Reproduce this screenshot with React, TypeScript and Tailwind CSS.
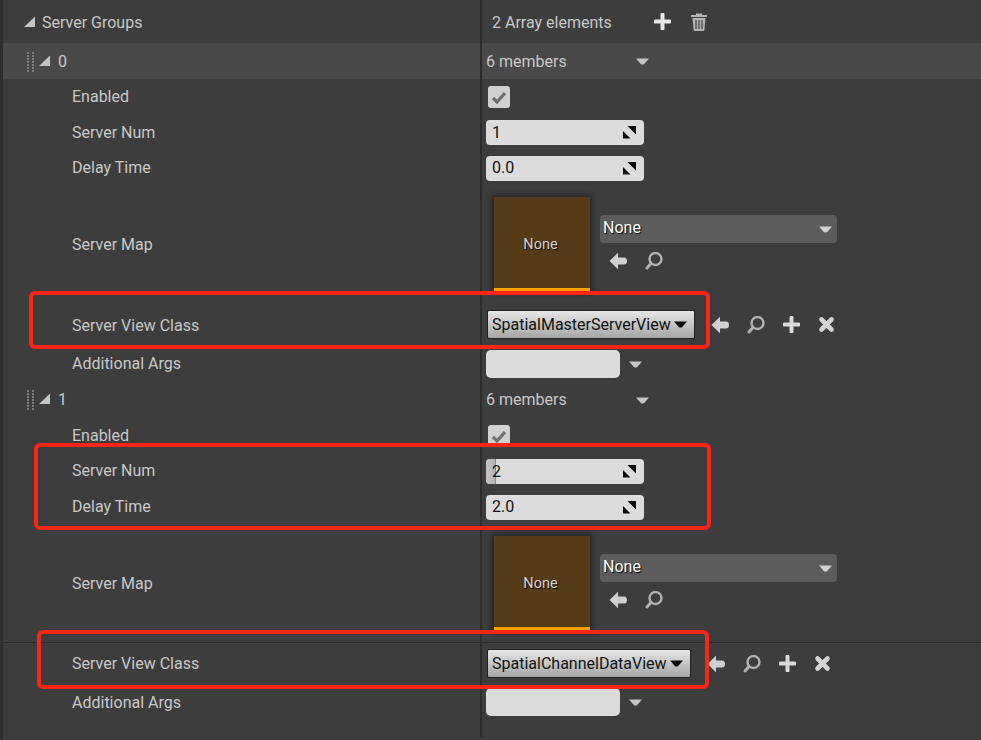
import React from 'react';

const Corner = ({ className = '' }: { className?: string }) => (
  <svg width="12" height="11" viewBox="0 0 12 11" className={className}>
    <path d="M0 11L11 0.5V11Z" fill="#c4c4c4" />
  </svg>
);

const Grip = () => (
  <svg width="8" height="21" viewBox="0 0 8 21" className="shrink-0">
    {[0, 3, 6, 9, 12, 15, 18].map((y) => (
      <g key={y} fill="#7d7d7d">
        <rect x="0" y={y} width="2" height="2" />
        <rect x="5" y={y} width="2" height="2" />
      </g>
    ))}
  </svg>
);

const Caret = ({ color = '#c4c4c4', className = '' }: { color?: string; className?: string }) => (
  <svg width="13" height="7" viewBox="0 0 13 7" className={className}>
    <path d="M0 0.5H13L8 6.2Q6.5 7 5 6.2Z" fill={color} />
  </svg>
);

const SpinIcon = () => (
  <svg width="13" height="13" viewBox="0 0 13 13" className="shrink-0 blur-[0.3px]">
    <path d="M4.5 0H13V8.5Z" fill="#0c0c0c" />
    <path d="M0 5L7.5 12.5H0Z" fill="#0c0c0c" />
  </svg>
);

const BackIcon = () => (
  <svg width="18" height="18" viewBox="0 0 18 18" className="shrink-0 blur-[0.3px]">
    <path d="M0.5 9L9 0.8V5.5H15Q18 5.5 18 9Q18 12.5 15 12.5H9V17.2Z" fill="#d0d0d0" />
  </svg>
);

const SearchIcon = () => (
  <svg width="18" height="18" viewBox="0 0 18 18" className="shrink-0 blur-[0.3px]">
    <circle cx="10.5" cy="7" r="6" fill="none" stroke="#b2b2b2" strokeWidth="2.4" />
    <path d="M5.8 11.8L2 16" stroke="#b2b2b2" strokeWidth="3" strokeLinecap="round" />
  </svg>
);

const PlusIcon = ({ color = '#d8d8d8' }: { color?: string }) => (
  <svg width="17" height="17" viewBox="0 0 17 17" className="shrink-0 blur-[0.3px]">
    <path d="M8.5 1.5V15.5M1.5 8.5H15.5" stroke={color} strokeWidth="4" strokeLinecap="round" />
  </svg>
);

const CloseIcon = () => (
  <svg width="17" height="17" viewBox="0 0 17 17" className="shrink-0 blur-[0.3px]">
    <path d="M3.5 3.5L13.5 13.5M13.5 3.5L3.5 13.5" stroke="#d4d4d4" strokeWidth="4.6" strokeLinecap="round" />
  </svg>
);

const TrashIcon = () => (
  <svg width="16" height="19" viewBox="0 0 16 19" className="shrink-0">
    <path d="M5 1.5H11V3H16V5H0V3H5Z" fill="#b4b4b4" />
    <path d="M1.5 6H14.5L13.4 18Q13.3 19 12.4 19H3.6Q2.7 19 2.6 18Z" fill="#b4b4b4" />
    <path d="M5 8V17M8 8V17M11 8V17" stroke="#3d3d3d" strokeWidth="1.2" />
  </svg>
);

const Row = ({
  height,
  label,
  right,
  indent = 'pl-[69px]',
  nudge = false,
  className = '',
}: {
  height: string;
  label: React.ReactNode;
  right: React.ReactNode;
  indent?: string;
  nudge?: boolean;
  className?: string;
}) => (
  <div className={`flex ${height} ${className}`}>
    <div className={`flex w-[477px] shrink-0 items-center ${indent} ${nudge ? 'pt-[2px]' : ''}`}>{label}</div>
    <div className="w-[2px] shrink-0 bg-[#2c2c2c]" />
    <div className="flex min-w-0 flex-1 items-center pl-1">{right}</div>
  </div>
);

const NumberField = ({ value, dragged = false }: { value: string; dragged?: boolean }) => (
  <div className="relative mt-px flex h-[25px] w-[158px] items-center justify-between overflow-hidden rounded-[4px] bg-[#dcdcdc] pl-1.5 pr-2 text-[#111]">
    {dragged && (
      <div className="absolute inset-y-0 left-0 w-[10px] border-r border-[#8a8a8a] bg-gradient-to-r from-[#c4c4c4] to-[#b4b4b4]" />
    )}
    <span className="relative">{value}</span>
    <SpinIcon />
  </div>
);

const Members = ({ nudge }: { nudge: boolean }) => (
  <div className="flex items-center">
    <span className={`w-[150px] ${nudge ? 'pt-[2px]' : ''}`}>6 members</span>
    <Caret />
  </div>
);

const Checkbox = () => (
  <div className="ml-[2px] flex h-[22px] w-[22px] items-center justify-center rounded-[3px] bg-[#d0d0d0]">
    <svg width="16" height="14" viewBox="0 0 16 14">
      <path d="M2 8L6 12L14 3" fill="none" stroke="#707070" strokeWidth="3.2" />
    </svg>
  </div>
);

const TextArg = () => (
  <div className="flex items-center">
    <div className="h-[28px] w-[134px] rounded-[5px] bg-[#dcdcdc]" />
    <Caret className="ml-[9px]" />
  </div>
);

const AssetPicker = () => (
  <div className="ml-2 flex items-center gap-[10px]">
    <div className="flex h-[94px] w-[96px] flex-col bg-[#553b17] shadow-[0_0_6px_2px_rgba(0,0,0,0.45)]">
      <div className="flex flex-1 items-center justify-center pr-[3px] pt-[5px] text-[14.5px] text-[#d2d2d2] [text-shadow:1px_1px_1px_#000]">
        None
      </div>
      <div className="h-[3px] bg-[#ffa000]" />
    </div>
    <div className="-mt-[3px] flex flex-col">
      <div className="flex h-[28px] w-[237px] items-center justify-between rounded-[4px] bg-[#5c5c5c] pb-[2px] pl-[3px] pr-[5px] text-white [text-shadow:1px_1px_1px_#000]">
        <span>None</span>
        <Caret color="#d0d0d0" className="mt-[2px]" />
      </div>
      <div className="ml-[9px] mt-[9px] flex items-center gap-[18px]">
        <BackIcon />
        <SearchIcon />
      </div>
    </div>
  </div>
);

const ClassPicker = ({ name, width, gap }: { name: string; width: string; gap: string }) => (
  <div className="flex items-center">
    <div
      className={`ml-px flex h-[29px] ${width} items-center justify-between rounded-[2px] border border-[#222] bg-gradient-to-b from-[#e6e6e6] to-[#a6a6a6] pl-1 pr-[7px] text-[#111]`}
    >
      <span>{name}</span>
      <Caret color="#0c0c0c" />
    </div>
    <div className={`${gap} flex items-center gap-[18px]`}>
      <BackIcon />
      <SearchIcon />
      <PlusIcon />
      <CloseIcon />
    </div>
  </div>
);

const Group = ({
  index,
  striped,
  value,
  delay,
  dragged,
  classHeight,
  first,
  className,
}: {
  index: string;
  striped: boolean;
  value: string;
  delay: string;
  dragged: boolean;
  classHeight: string;
  first: boolean;
  className: React.ReactNode;
}) => (
  <>
    <Row
      height="h-[36px]"
      className={striped ? 'bg-[#494949]' : ''}
      indent="pl-6"
      nudge={first}
      label={
        <div className="flex items-center">
          <Grip />
          <Corner className="ml-[4px] -mt-[3px]" />
          <span className="ml-[7px]">{index}</span>
        </div>
      }
      right={<Members nudge={first} />}
    />
    <Row height="h-[35px]" label="Enabled" right={<Checkbox />} />
    <Row
      height="h-[36px]"
      nudge={first}
      label="Server Num"
      right={<NumberField value={value} dragged={dragged} />}
    />
    <Row height="h-[35px]" label="Delay Time" right={<NumberField value={delay} />} />
    <Row height="h-[118px]" nudge label="Server Map" right={<AssetPicker />} />
    <Row
      height={classHeight}
      nudge={first}
      className={first ? '' : 'border-t border-[#2c2c2c]'}
      label="Server View Class"
      right={className}
    />
    <Row height="h-[36px]" nudge={!first} label="Additional Args" right={<TextArg />} />
  </>
);

export default function App() {
  return (
    <div className="relative h-[740px] w-[981px] overflow-hidden bg-[#3d3d3d] font-['Roboto',sans-serif] text-[16px] text-[#c8c8c8]">
      <div className="ml-[3px] flex h-[737px] flex-col">
        <Row
          height="h-[43px]"
          indent="pl-[21px]"
          nudge
          label={
            <div className="flex items-center">
              <Corner className="-mt-[2px]" />
              <span className="ml-[6px]">Server Groups</span>
            </div>
          }
          right={
            <div className="flex items-center pl-[6px]">
              <span className="pt-[2px]">2 Array elements</span>
              <div className="ml-[42px] flex items-center gap-[20px]">
                <PlusIcon color="#e6e6e6" />
                <TrashIcon />
              </div>
            </div>
          }
        />
        <Group
          index="0"
          striped
          first
          value="1"
          delay="0.0"
          dragged={false}
          classHeight="h-[43px]"
          className={<ClassPicker name="SpatialMasterServerView" width="w-[208px]" gap="ml-4" />}
        />
        <Group
          index="1"
          striped={false}
          first={false}
          value="2"
          delay="2.0"
          dragged
          classHeight="h-[42px]"
          className={<ClassPicker name="SpatialChannelDataView" width="w-[204px]" gap="ml-4" />}
        />
        <div className="flex flex-1">
          <div className="w-[477px]" />
          <div className="w-[2px] bg-[#2c2c2c]" />
        </div>
      </div>
      <div className="absolute inset-y-0 left-0 w-[3px] bg-[#2e2e2e]" />

      {/* red highlight frames from the annotated screenshot */}
      <div className="pointer-events-none absolute left-[29px] top-[291px] h-[58px] w-[681px] rounded-[6px] border-4 border-[#fb2616]" />
      <div className="pointer-events-none absolute left-[34px] top-[443px] h-[87px] w-[677px] rounded-[6px] border-4 border-[#fb2616]" />
      <div className="pointer-events-none absolute left-[37px] top-[630px] h-[59px] w-[672px] rounded-[6px] border-4 border-[#fb2616]" />
    </div>
  );
}
